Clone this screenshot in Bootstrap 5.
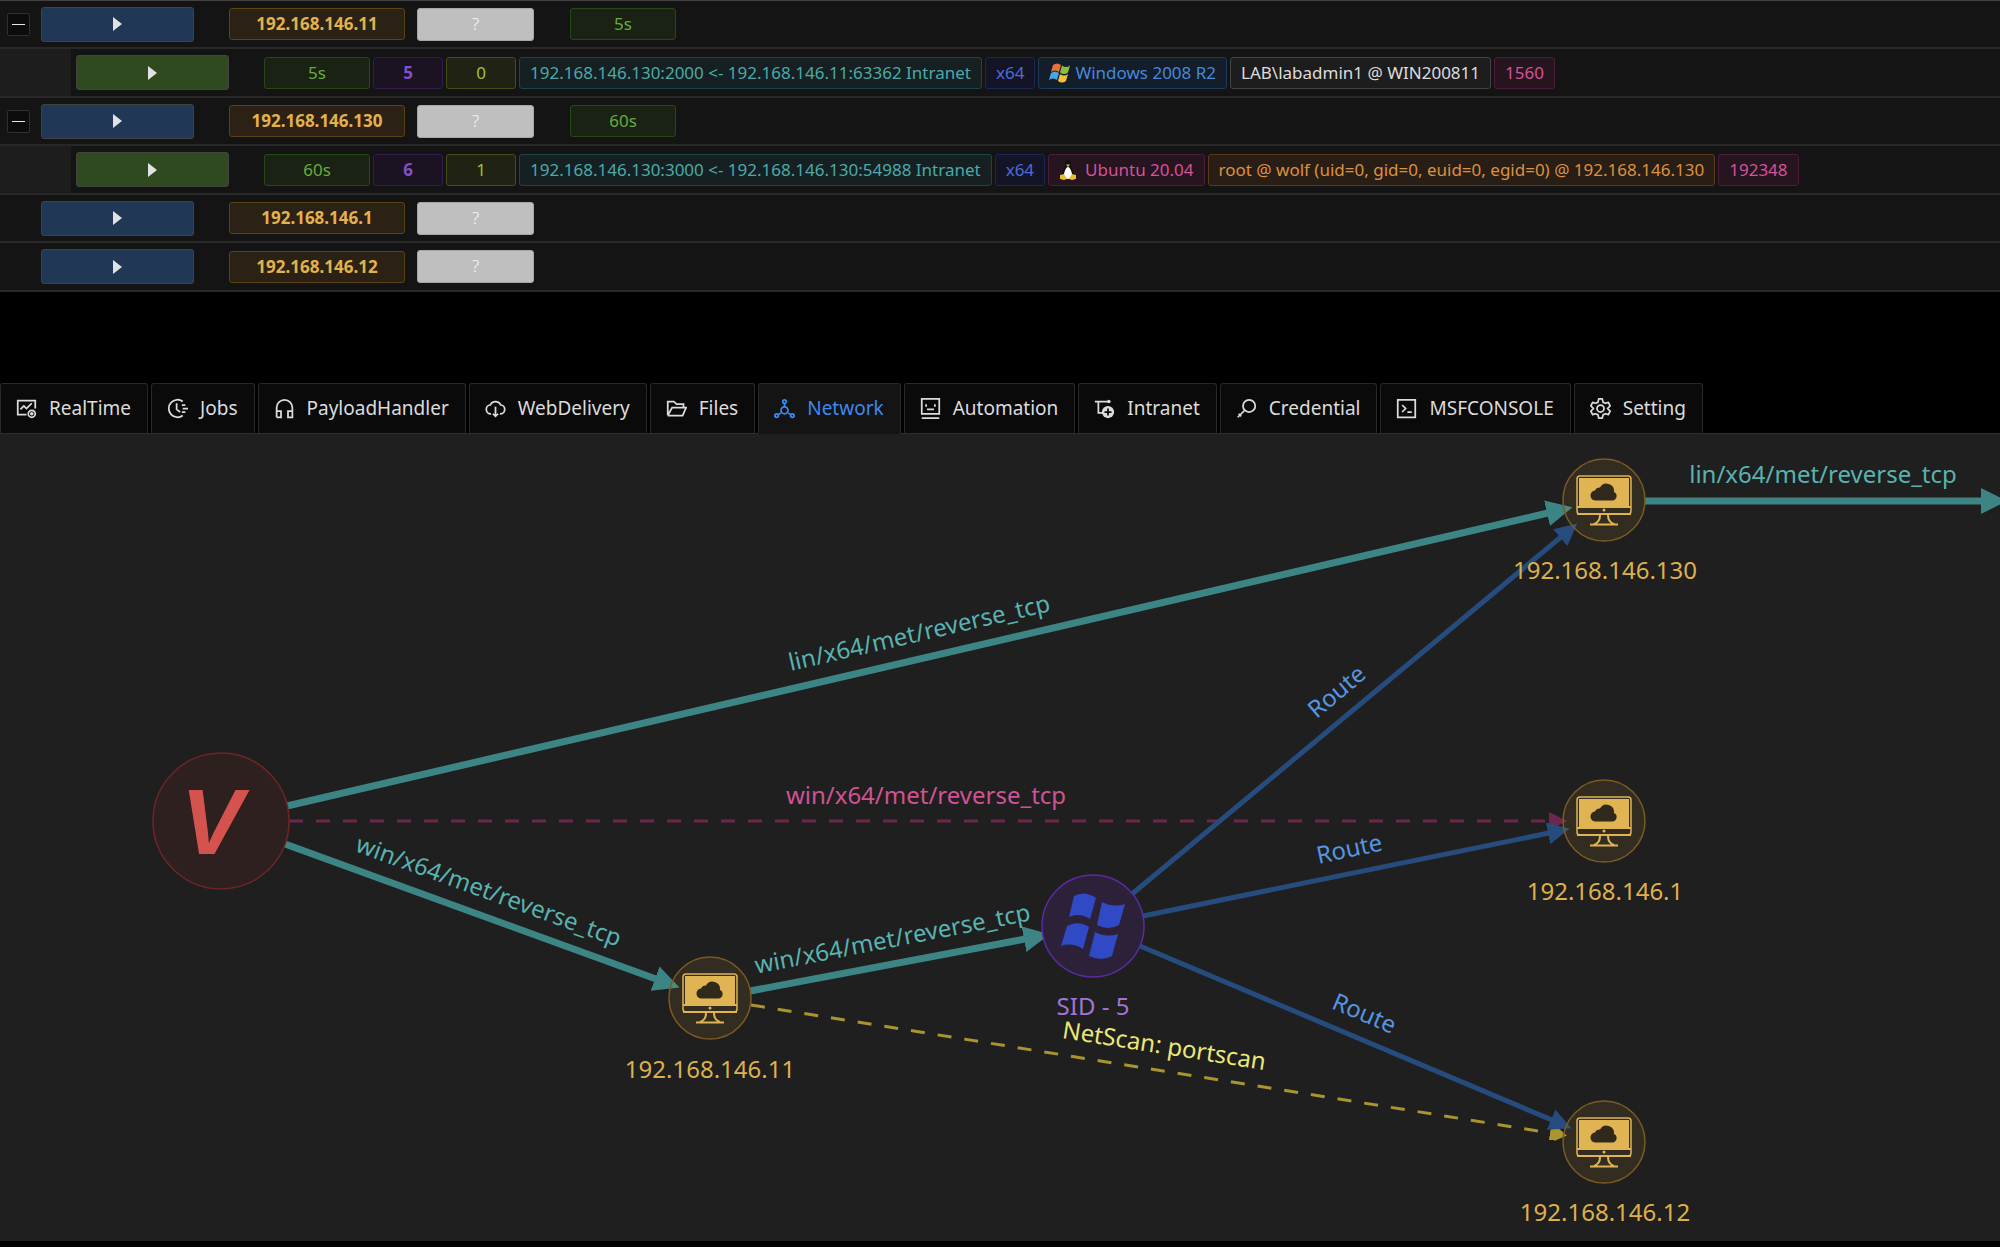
<!DOCTYPE html>
<html lang="en" data-bs-theme="dark">
<head>
<meta charset="utf-8">
<meta name="viewport" content="width=device-width, initial-scale=1">
<title>Network</title>
<link href="https://cdn.jsdelivr.net/npm/bootstrap@5.3.0/dist/css/bootstrap.min.css" rel="stylesheet">
<style>
body{background:#000;color:#dcdcdc;font-family:"Noto Sans","Open Sans",sans-serif;font-size:17px;overflow-x:hidden}
.hosts{background:#141414;border-top:1px solid #434343}
.host-row{height:48px;border-bottom:2px solid #282828;white-space:nowrap}
.host-row:nth-child(even){height:49px}
.toggle-slot{width:23px;margin:0 11px 0 7px}
.toggle-btn{width:23px;height:23px;background:#0c0c0c;border:1px solid #303030;border-radius:2px}
.toggle-btn i{display:block;width:13px;height:1px;background:#e6e6e6}
.indent{width:71px;background:#1d1d1d;margin-right:5px}
.play{width:153px;height:35px;border:1px solid #434343;border-radius:3px;color:#e0e2e6;margin-right:35px}
.play-host{background:#203755}
.play-session{background:#304a1f}
.sess-tags{gap:3px}
.tagx{height:32px;line-height:30px;padding:0 10px;border:1px solid;border-radius:3px;text-align:center}
.w-ip{width:176px;margin-right:12px;font-weight:700}
.w-os{width:117px;height:33px;margin-right:36px}
.w-time{width:106px}
.w-num{width:70px}
.tg-gold{background:#2b2115;border-color:#594214;color:#e3b24c}
.tg-none{background:#bfbfbf;border-color:#a6a6a6;color:#fafafa;font-weight:300}
.tg-green{background:#192213;border-color:#274916;color:#67ac3d}
.tg-purple{background:#1b1322;border-color:#301c4d;color:#8050c8;font-weight:700}
.tg-lime{background:#202313;border-color:#424f17;color:#9fc23a}
.tg-cyan{background:#162022;border-color:#1c4546;color:#4baaa8}
.tg-geek{background:#131526;border-color:#1c2755;color:#5069d8}
.tg-blue{background:#141d2a;border-color:#1a3a5e;color:#4589dc}
.tg-plain{background:#1d1d1d;border-color:#434343;color:#dcdcdc}
.tg-magenta{background:#26141f;border-color:#4d1c3a;color:#d5529a}
.tg-orange{background:#281e15;border-color:#593b17;color:#dd9140}
.main-tabs{margin-top:91px;gap:3px;border-bottom:1px solid #303030;flex-wrap:nowrap}
.main-tabs .nav-link{height:51px;padding:0 16px 0 15px;margin-bottom:-1px;background:#0a0a0a;border:1px solid #282828;border-bottom-color:#303030;border-radius:3px 3px 0 0;color:#dcdcdc;font-size:19px;gap:12px;white-space:nowrap}
.main-tabs .nav-link.active{background:#141414;border-color:#282828 #282828 #141414;color:#3c89f0}
.main-tabs svg{width:21px;height:21px;flex:none;fill:none;stroke:currentColor;stroke-width:2}
.board{background:#1f1f1f;margin-bottom:6px}
.board svg{display:block;width:100%;height:auto}
.board text{font-size:24px;text-anchor:middle}
.e-teal{stroke:#3c8584;stroke-width:7}
.e-blue{stroke:#264c7d;stroke-width:5}
.e-pink{stroke:#6c274f;stroke-width:3}
.e-yellow{stroke:#a8952f;stroke-width:3}
.e-pink,.e-yellow{stroke-dasharray:14 13}
.t-teal{fill:#58b3b0}.t-blue{fill:#5595e2}.t-pink{fill:#cf5394}.t-yellow{fill:#ece878}.t-gold{fill:#deb04c}.t-purple{fill:#a274d4}
.board .logo{font:italic 700 93px "Liberation Sans",sans-serif;fill:#d5534e}
</style>
</head>
<body>
<section class="hosts">
  <div class="host-row d-flex align-items-center">
    <div class="toggle-slot"><button class="toggle-btn d-flex align-items-center justify-content-center p-0" aria-label="Collapse"><i></i></button></div>
    <button class="play play-host p-0 d-flex align-items-center justify-content-center" aria-label="Run"><svg width="9" height="14"><path d="M0 0l9 7-9 7z" fill="currentColor"/></svg></button>
    <span class="tagx w-ip tg-gold">192.168.146.11</span><span class="tagx w-os tg-none">?</span><span class="tagx w-time tg-green">5s</span>
  </div>
  <div class="host-row d-flex align-items-center">
    <div class="indent align-self-stretch"></div>
    <button class="play play-session p-0 d-flex align-items-center justify-content-center" aria-label="Run"><svg width="9" height="14"><path d="M0 0l9 7-9 7z" fill="currentColor"/></svg></button>
    <div class="d-flex sess-tags"><span class="tagx w-time tg-green">5s</span><span class="tagx w-num tg-purple">5</span><span class="tagx w-num tg-lime">0</span><span class="tagx tg-cyan">192.168.146.130:2000 &lt;- 192.168.146.11:63362 Intranet</span><span class="tagx tg-geek">x64</span><span class="tagx tg-blue d-flex align-items-center gap-1"><svg width="22" height="20" viewBox="0 0 22 20"><path d="M4 2q4-3 8 0l-2 7q-4-3-8 0z" fill="#e8703a"/><path d="M13 2.500q4 3 8 0l-2 7q-4 3-8 0z" fill="#8fbe3a"/><path d="M2 10q4-3 8 0l-2 7q-4-3-8 0z" fill="#45a6e6"/><path d="M11 11q4 3 8 0l-2 7q-4 3-8 0z" fill="#f3c03c"/></svg>Windows 2008 R2</span><span class="tagx tg-plain">LAB\labadmin1 @ WIN200811</span><span class="tagx tg-magenta">1560</span></div>
  </div>
  <div class="host-row d-flex align-items-center">
    <div class="toggle-slot"><button class="toggle-btn d-flex align-items-center justify-content-center p-0" aria-label="Collapse"><i></i></button></div>
    <button class="play play-host p-0 d-flex align-items-center justify-content-center" aria-label="Run"><svg width="9" height="14"><path d="M0 0l9 7-9 7z" fill="currentColor"/></svg></button>
    <span class="tagx w-ip tg-gold">192.168.146.130</span><span class="tagx w-os tg-none">?</span><span class="tagx w-time tg-green">60s</span>
  </div>
  <div class="host-row d-flex align-items-center">
    <div class="indent align-self-stretch"></div>
    <button class="play play-session p-0 d-flex align-items-center justify-content-center" aria-label="Run"><svg width="9" height="14"><path d="M0 0l9 7-9 7z" fill="currentColor"/></svg></button>
    <div class="d-flex sess-tags"><span class="tagx w-time tg-green">60s</span><span class="tagx w-num tg-purple">6</span><span class="tagx w-num tg-lime">1</span><span class="tagx tg-cyan">192.168.146.130:3000 &lt;- 192.168.146.130:54988 Intranet</span><span class="tagx tg-geek">x64</span><span class="tagx tg-magenta d-flex align-items-center gap-2"><svg width="18" height="20" viewBox="0 0 18 20"><path d="M9 0c-3 0-3 3-3 5 0 3-3 6-3 10l2 4h8l2-4c0-4-3-7-3-10 0-2 0-5-3-5z" fill="#111"/><path d="M9 7c-2 0-4 5-4 8 0 2 2 4 4 4s4-2 4-4c0-3-2-8-4-8z" fill="#fff"/><path d="M7 4.500h4L9 7zM1 15l4-1 3 5-3 1-4-1zM17 15l-4-1-3 5 3 1 4-1z" fill="#eab92d"/></svg>Ubuntu 20.04</span><span class="tagx tg-orange">root @ wolf (uid=0, gid=0, euid=0, egid=0) @ 192.168.146.130</span><span class="tagx tg-magenta">192348</span></div>
  </div>
  <div class="host-row d-flex align-items-center">
    <div class="toggle-slot"></div>
    <button class="play play-host p-0 d-flex align-items-center justify-content-center" aria-label="Run"><svg width="9" height="14"><path d="M0 0l9 7-9 7z" fill="currentColor"/></svg></button>
    <span class="tagx w-ip tg-gold">192.168.146.1</span><span class="tagx w-os tg-none">?</span>
  </div>
  <div class="host-row d-flex align-items-center">
    <div class="toggle-slot"></div>
    <button class="play play-host p-0 d-flex align-items-center justify-content-center" aria-label="Run"><svg width="9" height="14"><path d="M0 0l9 7-9 7z" fill="currentColor"/></svg></button>
    <span class="tagx w-ip tg-gold">192.168.146.12</span><span class="tagx w-os tg-none">?</span>
  </div>
</section>

<ul class="nav nav-tabs main-tabs">
  <li class="nav-item"><button class="nav-link d-flex align-items-center"><svg viewBox="0 0 24 24"><path d="M12 19H2V3h20v9M5 13l4-4 3 3 6-6"/><circle cx="18" cy="18" r="4"/><circle cx="18" cy="18" r="1"/></svg>RealTime</button></li>
  <li class="nav-item"><button class="nav-link d-flex align-items-center"><svg viewBox="0 0 24 24"><path d="M18 4a10 10 0 1 0 0 16M11 6v7l4 3M17 8h4M18 12h6M17 16h4"/></svg>Jobs</button></li>
  <li class="nav-item"><button class="nav-link d-flex align-items-center"><svg viewBox="0 0 24 24"><path d="M3 22V11a9 9 0 0 1 18 0v11h-5v-7h5M3 15h5v7H3"/></svg>PayloadHandler</button></li>
  <li class="nav-item"><button class="nav-link d-flex align-items-center"><svg viewBox="0 0 24 24"><path d="M7 18a5 5 0 0 1-1-10 6.500 6.500 0 0 1 12 0 5 5 0 0 1-1 10M12 10v11M9 18l3 3 3-3"/></svg>WebDelivery</button></li>
  <li class="nav-item"><button class="nav-link d-flex align-items-center"><svg viewBox="0 0 24 24"><path d="M2 20V4h7l3 3h8v4M2 20h17l4-9H7L2 20"/></svg>Files</button></li>
  <li class="nav-item"><button class="nav-link active d-flex align-items-center"><svg viewBox="0 0 24 24"><circle cx="12" cy="4" r="2"/><circle cx="12" cy="14" r="4"/><circle cx="3" cy="20" r="2"/><circle cx="21" cy="20" r="2"/><path d="M12 6v4M8 17l-3 2M16 17l3 2"/></svg>Network</button></li>
  <li class="nav-item"><button class="nav-link d-flex align-items-center"><svg viewBox="0 0 24 24"><path d="M2 1h20v17H2zM2 23h20M8 13h8M7 7v3M17 7v3"/></svg>Automation</button></li>
  <li class="nav-item"><button class="nav-link d-flex align-items-center"><svg viewBox="0 0 24 24"><path d="M1 4h15M5 4v13h5"/><circle cx="17" cy="4" r="2" fill="currentColor" stroke="none"/><circle cx="16" cy="16" r="7" fill="currentColor" stroke="none"/><path d="M16 12v8M12 16h8" stroke="#0a0a0a"/></svg>Intranet</button></li>
  <li class="nav-item"><button class="nav-link d-flex align-items-center"><svg viewBox="0 0 24 24"><circle cx="15" cy="9" r="7"/><path d="M10 14l-8 8M3 18l3 3"/></svg>Credential</button></li>
  <li class="nav-item"><button class="nav-link d-flex align-items-center"><svg viewBox="0 0 24 24"><path d="M2 2h20v20H2zM7 8l4 4-4 4M13 16h5"/></svg>MSFCONSOLE</button></li>
  <li class="nav-item"><button class="nav-link d-flex align-items-center"><svg viewBox="0 0 24 24"><circle cx="12" cy="12" r="4"/><path d="M10 1h4l1 4 3 1 3-1 2 4-3 3 3 3-2 4-3-1-3 1-1 4h-4l-1-4-3-1-3 1-2-4 3-3-3-3 2-4 3 1 3-1z" stroke-linejoin="round"/></svg>Setting</button></li>
</ul>

<main class="board">
<svg viewBox="0 434 2000 807" role="img" aria-label="Network topology">
  <defs>
    <marker id="tipTeal" markerUnits="userSpaceOnUse" markerWidth="26" markerHeight="26" refX="1" refY="13" orient="auto"><path d="M0 0l26 13-26 13z" fill="#3c8584"/></marker>
    <marker id="tipBlue" markerUnits="userSpaceOnUse" markerWidth="22" markerHeight="22" refX="1" refY="11" orient="auto"><path d="M0 0l22 11-22 11z" fill="#264c7d"/></marker>
    <marker id="tipPink" markerUnits="userSpaceOnUse" markerWidth="18" markerHeight="18" refX="1" refY="9" orient="auto"><path d="M0 0l18 9-18 9z" fill="#6c274f"/></marker>
    <marker id="tipYellow" markerUnits="userSpaceOnUse" markerWidth="17" markerHeight="14" refX="1" refY="7" orient="auto"><path d="M0 0h6l11 7-11 7H0z" fill="#a8952f"/></marker>
    <g id="host">
      <circle r="41" fill="#e8b339" fill-opacity=".1" stroke="#7b5a22" stroke-width="1.500"/>
      <rect x="-27" y="-24" width="54" height="38" rx="3" fill="none" stroke="#e0b452" stroke-width="1.500"/>
      <path d="M-25-22h50V6h-50z" fill="#e0b452"/>
      <path d="M-27 7h54M-27 14h54" stroke="#e0b452" stroke-width="2"/>
      <circle cy="10" r="1.500" fill="#e0b452"/>
      <path d="M-4 15q0 7-6 9M4 15q0 7 6 9M-14 24.500h28" fill="none" stroke="#e0b452" stroke-width="2"/>
      <path d="M-8 0.500a5 5 0 0 1-1-10a5 5 0 0 1 5-3a7.500 7.500 0 0 1 14 4.500a4.500 4.500 0 0 1-1 8.500z" fill="#32291d"/>
    </g>
  </defs>

  <path class="e-teal" d="M287 806L1548 513" marker-end="url(#tipTeal)"/>
  <path class="e-pink" d="M289 821H1550" marker-end="url(#tipPink)"/>
  <path class="e-teal" d="M285 844L656 979" marker-end="url(#tipTeal)"/>
  <path class="e-teal" d="M750 991L1025 939" marker-end="url(#tipTeal)"/>
  <path class="e-teal" d="M1645 501H1982" marker-end="url(#tipTeal)"/>
  <path class="e-yellow" d="M751 1005L1551 1133" marker-end="url(#tipYellow)"/>
  <path class="e-blue" d="M1132 894L1561 537" marker-end="url(#tipBlue)"/>
  <path class="e-blue" d="M1143 916L1549 833" marker-end="url(#tipBlue)"/>
  <path class="e-blue" d="M1140 946L1552 1120" marker-end="url(#tipBlue)"/>

  <circle cx="221" cy="821" r="68" fill="#2e201f" stroke="#6e2526" stroke-width="1.500"/>
  <text class="logo" x="212" y="854">V</text>
  <circle cx="1093" cy="926" r="51" fill="#2c2138" stroke="#5a2ba4" stroke-width="1.500"/>
  <g fill="#3049c4" transform="translate(1093 926)">
    <path d="M-19-30q11-6 22 2l-6 21q-11-7-21-2z"/><path d="M9-24q12 6 23 2l-6 21q-11 6-22 0z"/>
    <path d="M-26 0q11-6 22 1l-6 22q-11-7-22-3z"/><path d="M2 6q11 6 23 2l-6 22q-11 6-23 0z"/>
  </g>
  <use href="#host" x="1604" y="500"/>
  <use href="#host" x="1604" y="821"/>
  <use href="#host" x="1604" y="1142"/>
  <use href="#host" x="710" y="998"/>

  <text class="t-teal" transform="translate(921 641) rotate(-13)">lin/x64/met/reverse_tcp</text>
  <text class="t-pink" x="926" y="804">win/x64/met/reverse_tcp</text>
  <text class="t-teal" transform="translate(486 899) rotate(20)">win/x64/met/reverse_tcp</text>
  <text class="t-teal" transform="translate(894 947) rotate(-11)">win/x64/met/reverse_tcp</text>
  <text class="t-teal" x="1823" y="483">lin/x64/met/reverse_tcp</text>
  <text class="t-blue" transform="translate(1342 698) rotate(-40)">Route</text>
  <text class="t-blue" transform="translate(1351 857) rotate(-12)">Route</text>
  <text class="t-blue" transform="translate(1361 1021) rotate(23)">Route</text>
  <text class="t-gold" x="1605" y="579">192.168.146.130</text>
  <text class="t-gold" x="1605" y="900">192.168.146.1</text>
  <text class="t-gold" x="1605" y="1221">192.168.146.12</text>
  <text class="t-gold" x="710" y="1078">192.168.146.11</text>
  <text class="t-purple" x="1093" y="1015">SID - 5</text>
  <text class="t-yellow" transform="translate(1163 1054) rotate(9)">NetScan: portscan</text>
</svg>
</main>
<script src="https://cdn.jsdelivr.net/npm/bootstrap@5.3.0/dist/js/bootstrap.bundle.min.js"></script>
</body>
</html>
